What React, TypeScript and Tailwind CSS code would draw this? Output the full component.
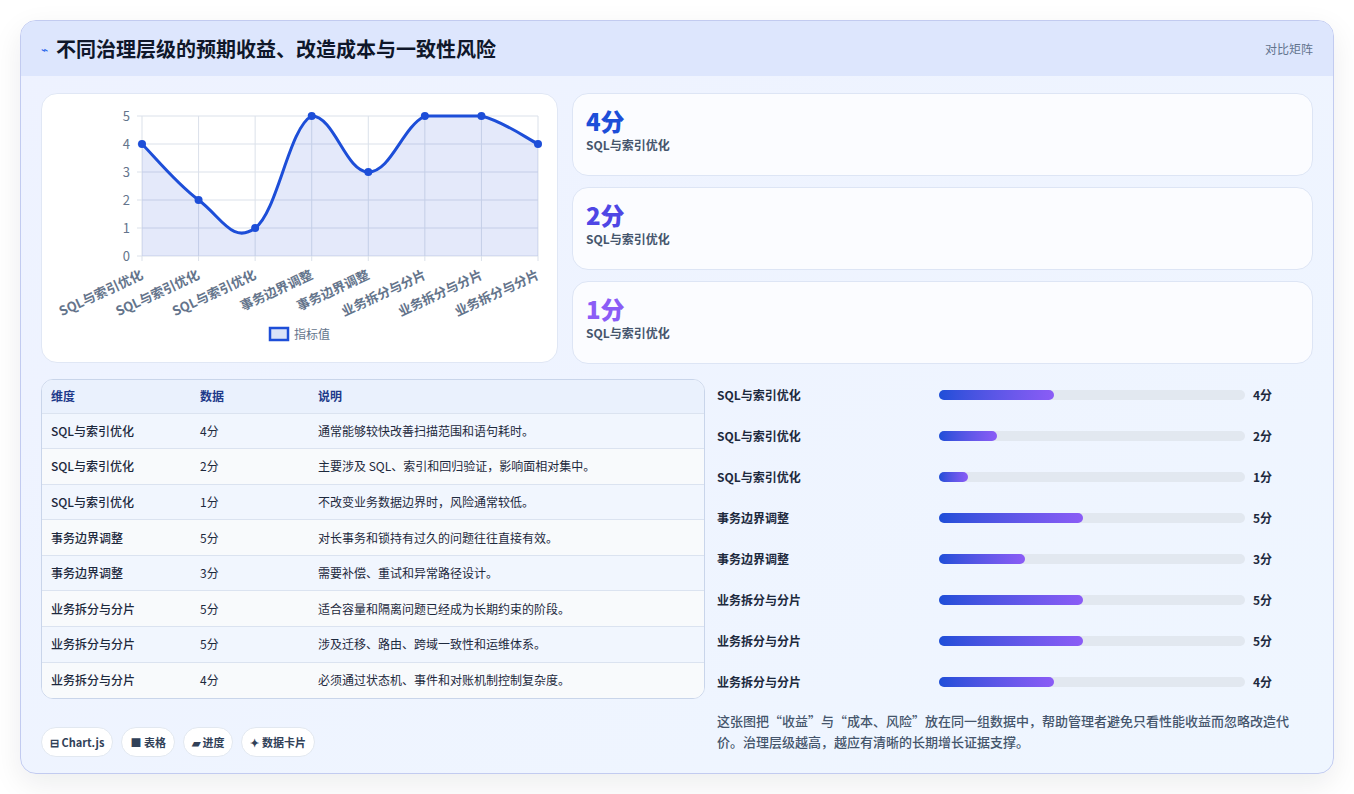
const rows = [
  { name: "SQL与索引优化", v: 4, note: "通常能够较快改善扫描范围和语句耗时。" },
  { name: "SQL与索引优化", v: 2, note: "主要涉及 SQL、索引和回归验证，影响面相对集中。" },
  { name: "SQL与索引优化", v: 1, note: "不改变业务数据边界时，风险通常较低。" },
  { name: "事务边界调整", v: 5, note: "对长事务和锁持有过久的问题往往直接有效。" },
  { name: "事务边界调整", v: 3, note: "需要补偿、重试和异常路径设计。" },
  { name: "业务拆分与分片", v: 5, note: "适合容量和隔离问题已经成为长期约束的阶段。" },
  { name: "业务拆分与分片", v: 5, note: "涉及迁移、路由、跨域一致性和运维体系。" },
  { name: "业务拆分与分片", v: 4, note: "必须通过状态机、事件和对账机制控制复杂度。" },
];

const font = { fontFamily: '"Noto Sans CJK SC", "Noto Sans", sans-serif' };

function Chart() {
  const x0 = 100, x1 = 496, yb = 162, step = 28;
  const dx = (x1 - x0) / 7;
  const top = yb - 5 * step;
  const pts = rows.map((r, i) => [x0 + i * dx, yb - r.v * step]);
  const cl = (y: number) => Math.max(top, y);
  let d = `M${pts[0][0]},${pts[0][1]}`;
  for (let i = 0; i < pts.length - 1; i++) {
    const p0 = pts[Math.max(i - 1, 0)], p1 = pts[i], p2 = pts[i + 1], p3 = pts[Math.min(i + 2, pts.length - 1)];
    const t = 0.2;
    const c1 = [p1[0] + (p2[0] - p0[0]) * t, cl(p1[1] + (p2[1] - p0[1]) * t)];
    const c2 = [p2[0] - (p3[0] - p1[0]) * t, cl(p2[1] - (p3[1] - p1[1]) * t)];
    d += ` C${c1[0]},${c1[1]} ${c2[0]},${c2[1]} ${p2[0]},${p2[1]}`;
  }
  const area = `${d} L${x1},${yb} L${x0},${yb} Z`;
  return (
    <svg width="516" height="268" className="block">
      {[0, 1, 2, 3, 4, 5].map((v) => (
        <g key={v}>
          <line x1={x0 - 5} x2={x1} y1={yb - v * step} y2={yb - v * step} stroke="#dbe1ea" />
          <text x={x0 - 12} y={yb - v * step + 5} textAnchor="end" fontSize="13" fill="#64748b">{v}</text>
        </g>
      ))}
      {pts.map((p, i) => (
        <line key={i} x1={p[0]} x2={p[0]} y1={top} y2={yb + 5} stroke="#dbe1ea" />
      ))}
      <path d={area} fill="#1d4ed8" fillOpacity="0.12" />
      <path d={d} fill="none" stroke="#1d4ed8" strokeWidth="3" />
      {pts.map((p, i) => (
        <circle key={i} cx={p[0]} cy={p[1]} r="4" fill="#1d4ed8" />
      ))}
      {pts.map((p, i) => (
        <text key={i} x={p[0] + 2} y={yb + 22} textAnchor="end" fontSize="13" fontWeight="600" fill="#64748b" transform={`rotate(-25 ${p[0] + 2} ${yb + 22})`}>{rows[i].name}</text>
      ))}
      <rect x="228" y="234" width="18" height="12" fill="#dbe3f8" stroke="#1d4ed8" strokeWidth="2.5" />
      <text x="252" y="245" fontSize="12" fill="#64748b">指标值</text>
    </svg>
  );
}

export default function App() {
  const cards = [
    { v: "4分", c: "text-[#1d4ed8]" },
    { v: "2分", c: "text-[#4f46e5]" },
    { v: "1分", c: "text-[#8b5cf6]" },
  ];
  return (
    <div style={font} className="min-h-[794px] bg-white px-5 pt-5 pb-5">
      <div className="overflow-hidden rounded-2xl border border-[#c2cbf0] bg-gradient-to-br from-[#eef2ff] to-[#eff6ff] shadow-[0_10px_30px_rgba(15,23,42,0.08)]">
        <div className="flex h-[55px] items-center justify-between bg-[#dde6fd] px-5">
          <div className="flex items-center gap-2">
            <span className="text-xs text-[#2563eb]">⌁</span>
            <h1 className="text-[20px] font-bold text-[#0f172a]">不同治理层级的预期收益、改造成本与一致性风险</h1>
          </div>
          <span className="text-xs text-slate-500">对比矩阵</span>
        </div>
        <div className="px-5 pt-[17px] pb-4">
          <div className="flex gap-[14px]">
            <div className="h-[270px] w-[517px] shrink-0 overflow-hidden rounded-2xl border border-[#e0e7f5] bg-white">
              <Chart />
            </div>
            <div className="flex flex-1 flex-col gap-[11px]">
              {cards.map((c, i) => (
                <div key={i} className="h-[83px] rounded-2xl border border-[#dde5f5] bg-[#fbfcff] px-[13px] pt-[11px]">
                  <div className={`text-2xl leading-8 font-extrabold ${c.c}`}>{c.v}</div>
                  <div className="text-xs font-semibold text-slate-600">SQL与索引优化</div>
                </div>
              ))}
            </div>
          </div>
          <div className="mt-[15px] flex gap-3">
            <div className="w-[664px] shrink-0">
              <div className="overflow-hidden rounded-xl border border-[#c9d5ea] bg-white">
                <table className="w-full text-xs text-slate-800">
                  <thead>
                    <tr className="h-[33px] bg-[#eaf1fd] text-left font-semibold text-[#1e3a8a]">
                      <th className="w-[158px] pl-[9px] font-semibold">维度</th>
                      <th className="w-[118px] font-semibold">数据</th>
                      <th className="font-semibold">说明</th>
                    </tr>
                  </thead>
                  <tbody>
                    {rows.map((r, i) => (
                      <tr key={i} className={`h-[35.6px] border-t border-[#dbe3f0] ${i % 2 ? "bg-[#f8fafc]" : "bg-[#f1f6fe]"}`}>
                        <td className="pl-[9px] font-medium">{r.name}</td>
                        <td>{r.v}分</td>
                        <td>{r.note}</td>
                      </tr>
                    ))}
                  </tbody>
                </table>
              </div>
              <div className="mt-[28px] flex gap-2">
                {["⊟ Chart.js", "■ 表格", "▰ 进度", "✦ 数据卡片"].map((t) => (
                  <span key={t} className="rounded-full border border-[#e2e8f0] bg-white px-2 py-[6px] text-[11px] font-semibold text-slate-700">{t}</span>
                ))}
              </div>
            </div>
            <div className="flex-1">
              <div className="-mt-[5px] flex flex-col">
                {rows.map((r, i) => (
                  <div key={i} className="flex h-[41px] items-center text-xs font-semibold text-slate-800">
                    <div className="w-[222px]">{r.name}</div>
                    <div className="h-[10px] w-[306px] rounded-full bg-[#e2e8f0]">
                      <div className="h-full rounded-full bg-gradient-to-r from-[#1d4ed8] to-[#8b5cf6]" style={{ width: `${r.v * 9.4}%` }} />
                    </div>
                    <div className="ml-2">{r.v}分</div>
                  </div>
                ))}
              </div>
              <p className="mt-2 text-[13px] leading-[21px] font-medium text-slate-600">这张图把“收益”与“成本、风险”放在同一组数据中，帮助管理者避免只看性能收益而忽略改造代价。治理层级越高，越应有清晰的长期增长证据支撑。</p>
            </div>
          </div>
        </div>
      </div>
    </div>
  );
}
